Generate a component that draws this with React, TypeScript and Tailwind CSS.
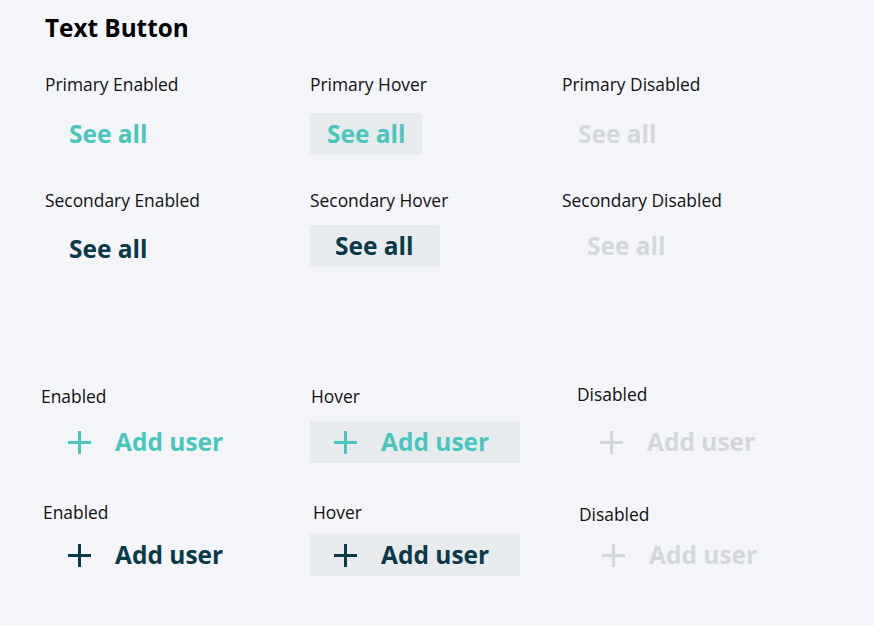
import { ReactNode } from 'react';

const font = { fontFamily: '"Open Sans", "Noto Sans", sans-serif' };

function Label({ children, className = '' }: { children: ReactNode; className?: string }) {
  return <div className={`h-[22px] text-[17.4px] leading-[22px] text-[#111] whitespace-nowrap ${className}`}>{children}</div>;
}

function SeeAll({ className = '' }: { className?: string }) {
  return (
    <div className={`h-[42px] w-fit flex items-center whitespace-nowrap text-[24.5px] font-bold leading-none rounded-[3px] ${className}`}>
      See all
    </div>
  );
}

function Plus({ color }: { color: string }) {
  return (
    <svg width="25" height="25" viewBox="0 0 25 25" className="shrink-0">
      <path d="M12.5 1v23M1 12.5h23" stroke={color} strokeWidth="3" fill="none" />
    </svg>
  );
}

function AddUser({ color, className = '' }: { color: string; className?: string }) {
  return (
    <div
      className={`h-[42px] flex items-center gap-[23px] whitespace-nowrap text-[24.5px] font-bold leading-none ${className}`}
      style={{ color }}
    >
      <Plus color={color} />
      <span>Add user</span>
    </div>
  );
}

export default function App() {
  const teal = '#4ac6bf';
  const dark = '#083a4a';
  const off = '#d3d7dc';

  return (
    <div className="min-h-screen w-full bg-[#f4f5f9] pt-[13px]" style={font}>
      <h1 className="pl-[45px] text-[24.3px] font-bold leading-[30px] text-black">Text Button</h1>

      <div className="mt-[30px] grid grid-cols-[310px_252px_1fr]">
        <div className="pl-[45px]">
          <Label>Primary Enabled</Label>
          <SeeAll className="mt-[18px] ml-[24px] text-[#4ac6bf]" />
          <Label className="mt-[34px]">Secondary Enabled</Label>
          <SeeAll className="mt-[17px] ml-[24px] text-[#083a4a]" />
        </div>
        <div>
          <Label>Primary Hover</Label>
          <SeeAll className="mt-[18px] pl-[17px] pr-[16px] bg-[#e8ebee] text-[#4ac6bf]" />
          <Label className="mt-[34px]">Secondary Hover</Label>
          <SeeAll className="mt-[14px] pl-[25px] pr-[26px] bg-[#e8ebee] text-[#083a4a]" />
        </div>
        <div>
          <Label>Primary Disabled</Label>
          <SeeAll className="mt-[18px] ml-[16px] text-[#d3d7dc]" />
          <Label className="mt-[34px]">Secondary Disabled</Label>
          <SeeAll className="mt-[14px] ml-[25px] text-[#d3d7dc]" />
        </div>
      </div>

      <div className="mt-[115px] grid grid-cols-[310px_252px_1fr]">
        <div className="pl-[41px]">
          <Label>Enabled</Label>
          <AddUser color={teal} className="mt-[14px] ml-[26px]" />
          <Label className="mt-[38px] ml-[2px]">Enabled</Label>
          <AddUser color={dark} className="mt-[11px] ml-[26px]" />
        </div>
        <div>
          <Label className="ml-[1px]">Hover</Label>
          <AddUser color={teal} className="mt-[14px] w-[210px] pl-[23px] bg-[#e8ebee]" />
          <Label className="mt-[38px] ml-[3px]">Hover</Label>
          <AddUser color={dark} className="mt-[11px] w-[210px] pl-[23px] bg-[#e8ebee]" />
        </div>
        <div className="pl-[15px]">
          <Label className="-mt-[2px]">Disabled</Label>
          <AddUser color={off} className="mt-[16px] ml-[22px]" />
          <Label className="mt-[40px] ml-[2px]">Disabled</Label>
          <AddUser color={off} className="mt-[9px] ml-[24px]" />
        </div>
      </div>
    </div>
  );
}
